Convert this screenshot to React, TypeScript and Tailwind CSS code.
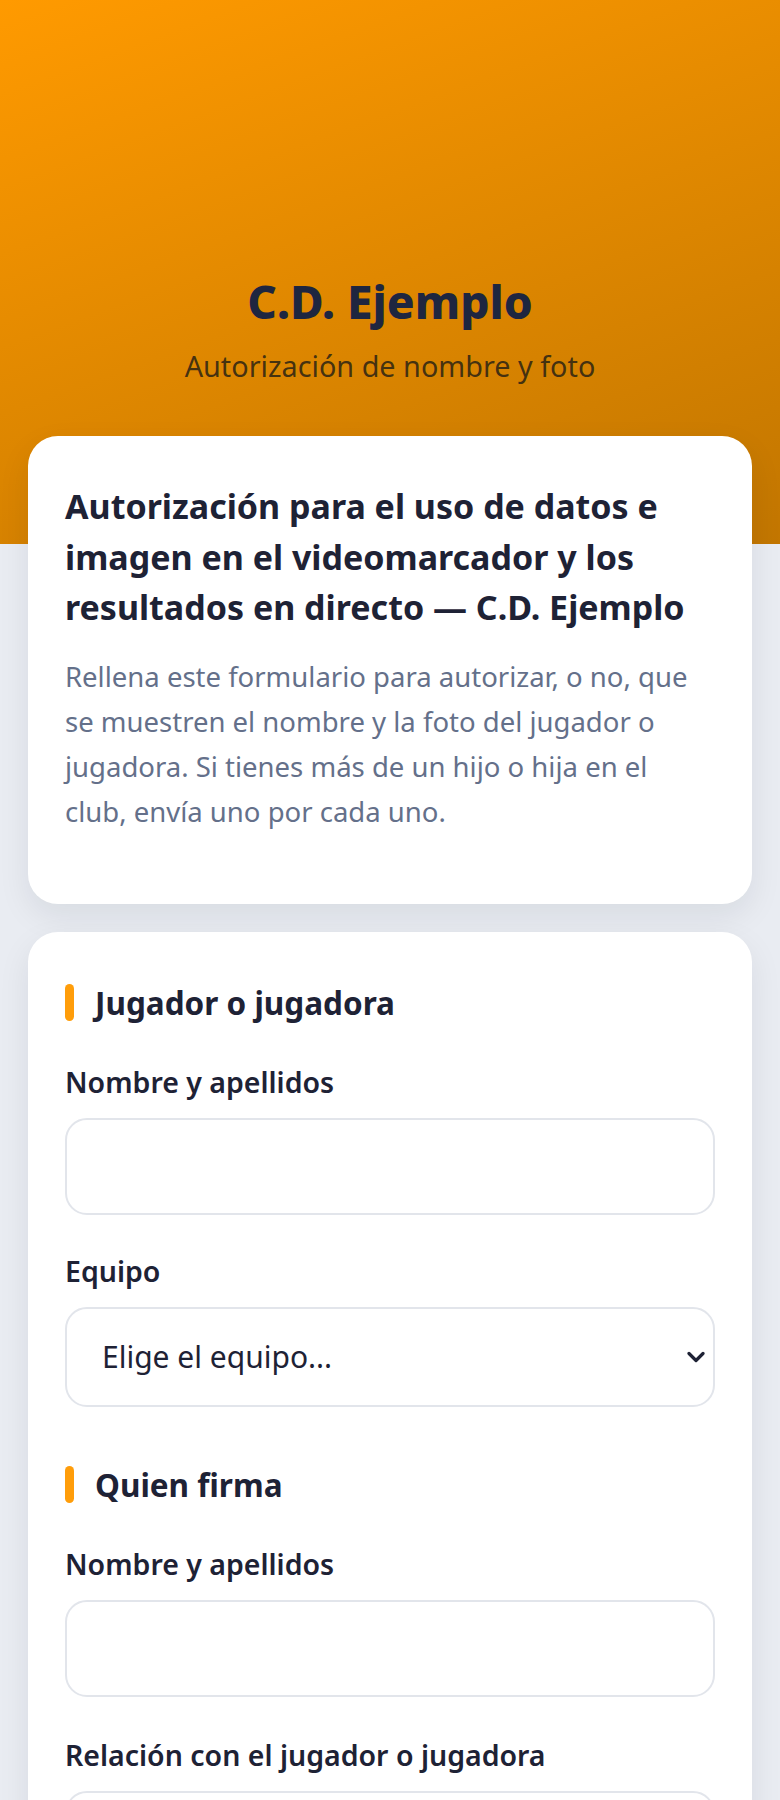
import React from "react";

function SectionTitle({ children }: { children: React.ReactNode }) {
  return (
    <div className="flex items-center gap-[21px] h-[42px]">
      <span className="w-[9px] h-[37px] rounded-full bg-[#ff9d0a]" />
      <h2 className="text-[31.5px] leading-[42px] font-bold text-[#1e2235]">{children}</h2>
    </div>
  );
}

function Label({ children }: { children: React.ReactNode }) {
  return (
    <label className="block text-[28.5px] leading-[42px] font-semibold text-[#1e2235] mb-[15px]">
      {children}
    </label>
  );
}

function TextInput() {
  return (
    <input
      type="text"
      className="block w-full h-[97px] rounded-[22px] border-2 border-[#e2e5eb] bg-white px-[36px] text-[30px] text-[#1e2235] outline-none"
    />
  );
}

export default function App() {
  return (
    <div
      className="min-h-[1800px] bg-[#e9ecf2]"
      style={{ fontFamily: '"Noto Sans", "Open Sans", sans-serif' }}
    >
      <header className="h-[544px] bg-[linear-gradient(160deg,#ff9a00_0%,#e08800_50%,#c27600_100%)] pt-[272px] text-center">
        <h1 className="text-[46px] leading-[58px] font-extrabold text-[#1e2640]">C.D. Ejemplo</h1>
        <p className="mt-[16px] text-[28.8px] leading-[40px] text-[#2a2314]/85">
          Autorización de nombre y foto
        </p>
      </header>

      <main className="-mt-[108px] px-[28px] flex flex-col gap-[28px]">
        <section className="bg-white rounded-[30px] shadow-[0_12px_32px_rgba(15,23,42,0.08)] px-[37px] pt-[45px] pb-[69px]">
          <h2 className="text-[34px] leading-[50.5px] font-bold text-[#1e2235]">
            Autorización para el uso de datos e imagen en el videomarcador y los resultados en directo — C.D. Ejemplo
          </h2>
          <p className="mt-[21px] text-[27.5px] leading-[45.3px] text-[#64708a]">
            Rellena este formulario para autorizar, o no, que se muestren el nombre y la foto del jugador o jugadora. Si tienes más de un hijo o hija en el club, envía uno por cada uno.
          </p>
        </section>

        <section className="bg-white rounded-[30px] shadow-[0_12px_32px_rgba(15,23,42,0.08)] px-[37px] pt-[50px] pb-[60px]">
          <SectionTitle>Jugador o jugadora</SectionTitle>
          <div className="mt-[37px]">
            <Label>Nombre y apellidos</Label>
            <TextInput />
          </div>
          <div className="mt-[35px]">
            <Label>Equipo</Label>
            <div className="relative">
              <select className="block w-full h-[100px] appearance-none rounded-[22px] border-2 border-[#e2e5eb] bg-white pl-[35px] pr-[60px] text-[30px] text-[#1e2235] outline-none">
                <option>Elige el equipo...</option>
              </select>
              <svg
                className="pointer-events-none absolute right-[10px] top-1/2 -translate-y-1/2"
                width="18"
                height="12"
                viewBox="0 0 18 12"
                fill="none"
              >
                <path d="M2 2.5 L9 9.5 L16 2.5" stroke="#1e2235" strokeWidth="3.2" strokeLinecap="round" strokeLinejoin="round" />
              </svg>
            </div>
          </div>

          <div className="mt-[57px]">
            <SectionTitle>Quien firma</SectionTitle>
          </div>
          <div className="mt-[37px]">
            <Label>Nombre y apellidos</Label>
            <TextInput />
          </div>
          <div className="mt-[37px]">
            <Label>Relación con el jugador o jugadora</Label>
            <TextInput />
          </div>
        </section>
      </main>
    </div>
  );
}
